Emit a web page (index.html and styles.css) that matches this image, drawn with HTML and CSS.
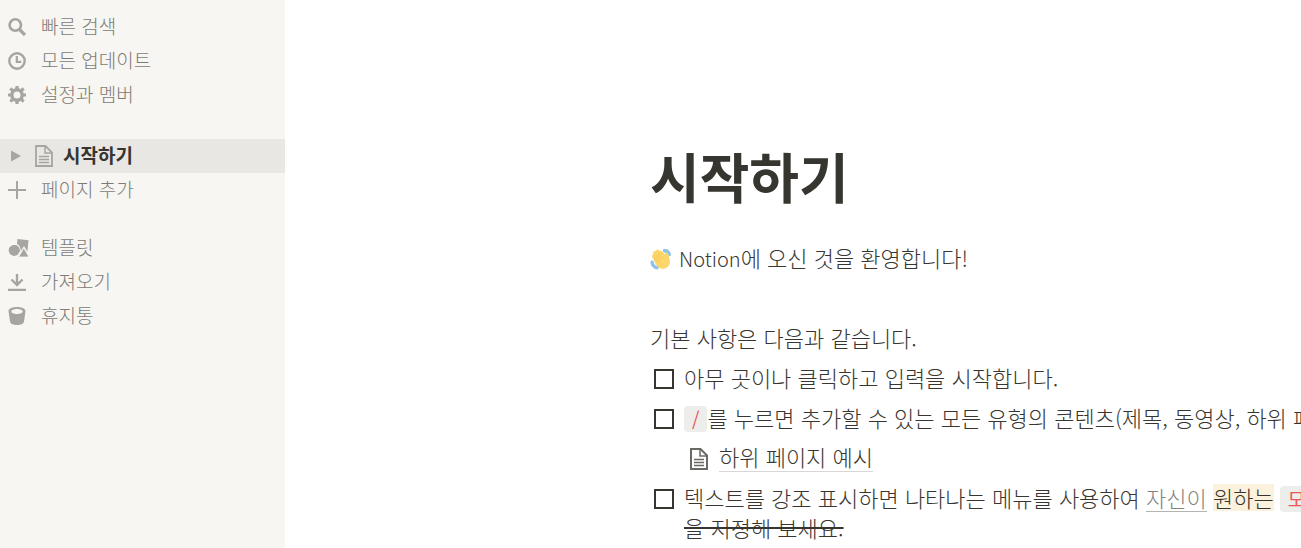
FILE: index.html
```
<!DOCTYPE html>
<html lang="ko">
<head>
    <meta charset="UTF-8">
    <meta name="viewport" content="width=device-width, initial-scale=1.0">
    <title>시작하기</title>
    <link rel="stylesheet" href="styles.css">
</head>
<body>
    <div class="app">
        <nav class="sidebar">
            <div class="nav-group">
                <a class="nav-item" href="#">
                    <svg class="icon" viewBox="0 0 18 18"><circle cx="7.300" cy="7" r="5.700" fill="none" stroke="currentColor" stroke-width="2.600"/><path d="M11 11l6 6" stroke="currentColor" stroke-width="3.200"/></svg>
                    <span>빠른 검색</span>
                </a>
                <a class="nav-item" href="#">
                    <svg class="icon" viewBox="0 0 18 18"><circle cx="9" cy="9" r="7.700" fill="none" stroke="currentColor" stroke-width="2.400"/><path d="M8.800 4v5.800h4.500" fill="none" stroke="currentColor" stroke-width="2.200"/></svg>
                    <span>모든 업데이트</span>
                </a>
                <a class="nav-item" href="#">
                    <svg class="icon" viewBox="0 0 18 18"><circle cx="9" cy="9" r="5.200" fill="none" stroke="currentColor" stroke-width="3.400"/><path d="M9 0v3M9 15v3M0 9h3M15 9h3M2.400 2.400l2.400 2.400M13.200 13.200l2.400 2.400M2.400 15.600l2.400-2.400M13.200 4.800l2.400-2.400" stroke="currentColor" stroke-width="3.200"/></svg>
                    <span>설정과 멤버</span>
                </a>
            </div>

            <div class="nav-group">
                <a class="nav-item active" href="#">
                    <svg class="icon" viewBox="0 0 18 18"><path d="M4 3.500l10 5.500-10 5.500z" fill="currentColor"/></svg>
                    <svg class="page-icon" viewBox="0 0 18 22"><path d="M1 1h9.500l6.500 6.500v13.500H1z" fill="none" stroke="currentColor" stroke-width="1.800"/><path d="M10 1v7H17M4 11.500h10M4 14.500h10M4 17.500h10" fill="none" stroke="currentColor" stroke-width="1.500"/></svg>
                    <span>시작하기</span>
                </a>
                <a class="nav-item" href="#">
                    <svg class="icon" viewBox="0 0 18 18"><path d="M9 0v18M0 9h18" stroke="currentColor" stroke-width="2"/></svg>
                    <span>페이지 추가</span>
                </a>
            </div>

            <div class="nav-group">
                <a class="nav-item" href="#">
                    <svg class="icon wide" viewBox="0 0 21 18"><path d="M9.500 0L20.500 1.300 19.400 12.500 16 7 12.800 12C12.700 8.500 11.200 6 9 5z" fill="currentColor"/><path d="M9.500 7A5.500 5.500 0 1 0 10.500 14.800L6.500 11z" fill="currentColor"/><path d="M6 6a5.500 5.500 0 0 1 5.800 6.500L9.500 15.500 5 12z" fill="currentColor"/><path d="M15.800 9L21 18H10.500z" fill="currentColor" stroke="#f7f6f2" stroke-width=".8"/></svg>
                    <span>템플릿</span>
                </a>
                <a class="nav-item" href="#">
                    <svg class="icon" viewBox="0 0 18 18"><path d="M9 1v10M3.500 6.500L9 12l5.500-5.500M0 17h18" fill="none" stroke="currentColor" stroke-width="2.400"/></svg>
                    <span>가져오기</span>
                </a>
                <a class="nav-item" href="#">
                    <svg class="icon" viewBox="0 0 18 18"><path fill-rule="evenodd" d="M9 0c4.800 0 8.500 1.600 8.500 4.200L16 14.500C15.600 17 12.500 18 9 18s-6.600-1-7-3.500L.5 4.200C.5 1.600 4.200 0 9 0zM9 2C6 2 3.300 3 3.300 4.500S6 7 9 7s5.700-1 5.700-2.500S12 2 9 2z" fill="currentColor"/></svg>
                    <span>휴지통</span>
                </a>
            </div>
        </nav>

        <main class="page">
            <h1>시작하기</h1>

            <p class="block">
                <svg class="emoji" viewBox="0 0 22 22">
                    <path d="M13.500 1.500C17.500.8 20.500 3 20.500 7.500L18 7C17.500 5 16 4 13.500 4zM1 13c-.5 5 2.500 8 7 8v-2.500C5 18.500 3.500 16.500 3 13z" fill="#8fc3ea" stroke="#8fc3ea"/>
                    <path d="M2.500 8.500c-.6-1.300.5-2.300 1.600-1.600L3.500 5C3.300 3.500 5 3 5.800 4.200L6 3c.7-1.300 2.200-1.300 3 0l.5.500c1-.8 2-.5 2.700.5l2.600 4 .2-2c.3-1.600 2.300-1.600 2.700 0l1.500 6c1 4-1 7-4.500 8-3.500 1-6.500-.5-8.300-3.500z" fill="#fcd66b" stroke="#fcd66b"/>
                    <path d="M5.800 7l4 5.500M8.300 5.500l4 5.300M4.500 9.500l3.500 5" fill="none" stroke="#f0bd48" stroke-width=".7"/>
                </svg>
                <span><span class="latin">Notion</span>에 오신 것을 환영합니다!</span>
            </p>
            <p class="block empty"></p>
            <p class="block">기본 사항은 다음과 같습니다.</p>

            <div class="todo">
                <input type="checkbox" id="todo1">
                <label for="todo1">아무 곳이나 클릭하고 입력을 시작합니다.</label>
            </div>
            <div class="todo">
                <input type="checkbox" id="todo2">
                <label for="todo2"><code>/</code>를 누르면 추가할 수 있는 모든 유형의 콘텐츠(제목, 동영상, 하위 페이</label>
            </div>
            <a class="subpage" href="#">
                <svg class="page-icon" viewBox="0 0 18 22"><path d="M1 1h9.500l6.500 6.500v13.500H1z" fill="none" stroke="currentColor" stroke-width="2"/><path d="M10 1v7H17M4 11.500h10M4 14.500h10M4 17.500h10" fill="none" stroke="currentColor" stroke-width="1.500"/></svg>
                <span>하위 페이지 예시</span>
            </a>
            <div class="todo">
                <input type="checkbox" id="todo3">
                <label for="todo3">텍스트를 강조 표시하면 나타나는 메뉴를 사용하여 <a class="link" href="#">자신이</a> <mark>원하는</mark> <code>모든</code><br><s>을 지정해 보세요.</s></label>
            </div>
        </main>
    </div>
</body>
</html>
```
FILE: styles.css
```
* {
    box-sizing: border-box;
}
body {
    margin: 0;
    font-family: "Noto Sans CJK KR", sans-serif;
    font-weight: 300;
    color: #37352f;
    background: white;
}
.app {
    display: flex;
    height: 100vh;
    overflow: hidden;
}

/* Sidebar */
.sidebar {
    flex: 0 0 285px;
    padding-top: 10px;
    background: #f7f6f2;
}
.nav-group {
    margin-bottom: 24px;
}
.nav-group:first-child {
    margin-bottom: 27px;
}
.nav-item {
    display: flex;
    align-items: center;
    gap: 15px;
    height: 34px;
    padding-left: 8px;
    font-size: 19px;
    line-height: 30px;
    color: #7d7b76;
    text-decoration: none;
}
.nav-item span {
    padding-bottom: 2px;
}
.nav-item.active {
    gap: 10px;
    padding-left: 7px;
    background: #e8e7e3;
    color: #37352f;
    font-weight: 700;
}
.icon {
    flex: none;
    width: 18px;
    height: 18px;
    color: #a6a5a1;
}
.icon.wide {
    width: 21px;
    margin-right: -3px;
}
.page-icon {
    flex: none;
    width: 18px;
    height: 22px;
}
.nav-item .page-icon {
    color: #a6a5a1;
}

/* Page content */
.page {
    flex: 1;
    min-width: 0;
    padding: 136px 0 0 365px;
    overflow: hidden;
    font-size: 22px;
    line-height: 30px;
    white-space: nowrap;
}
h1 {
    margin: 0 0 26px;
    font-size: 54px;
    font-weight: 700;
    line-height: 80px;
}
.block {
    display: flex;
    align-items: center;
    gap: 7px;
    min-height: 30px;
    margin: 0 0 10px;
}
.emoji {
    width: 22px;
    height: 22px;
    margin-top: 4px;
}
.latin {
    font-size: 20px;
    line-height: 1;
}
.todo {
    display: flex;
    align-items: flex-start;
    gap: 10px;
    margin-bottom: 10px;
    padding-left: 4px;
}
.todo input {
    appearance: none;
    flex: none;
    width: 20px;
    height: 20px;
    margin: 7px 0 0;
    border: 2px solid #37352f;
}
code {
    display: inline-block;
    padding: 0 8px;
    border-radius: 4px;
    background: #ededeb;
    color: #eb5757;
    font-family: inherit;
    font-size: 19px;
    font-weight: 400;
    line-height: 26px;
}
.subpage {
    display: flex;
    align-items: center;
    gap: 11px;
    margin-bottom: 10px;
    padding-left: 40px;
    color: #37352f;
    text-decoration: none;
}
.subpage .page-icon {
    margin-top: 4px;
    color: #6b6964;
}
.subpage span {
    height: 30px;
    line-height: 28px;
    border-bottom: 1px solid #d8d7d5;
}
.link,
mark {
    display: inline-block;
    line-height: 27px;
}
.link {
    border-bottom: 1px solid #b5b4b1;
    color: #85837e;
    text-decoration: none;
}
mark {
    background: #fbf1dc;
    color: inherit;
}
s {
    text-decoration-thickness: 2px;
}
```
